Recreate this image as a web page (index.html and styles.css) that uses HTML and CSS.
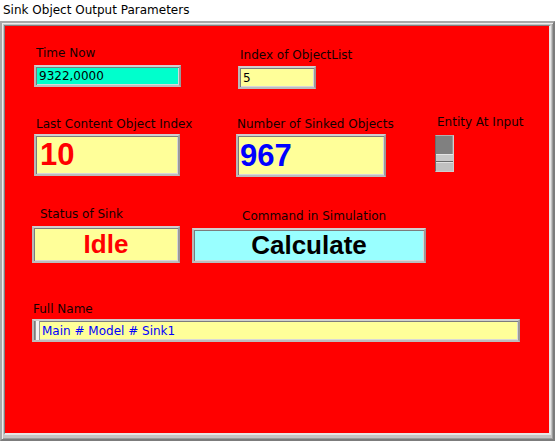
FILE: index.html
```html
<!DOCTYPE html>
<html>
<head>
<meta charset="utf-8">
<link rel="stylesheet" href="styles.css">
</head>
<body>
<div class="title">Sink Object Output Parameters</div>
<div class="frame">
  <div class="panel">
    <div class="row row1">
      <div class="item i-time">
        <div class="label">Time Now</div>
        <div class="field small cyan f-time">9322,0000</div>
      </div>
      <div class="item i-index">
        <div class="label">Index of ObjectList</div>
        <div class="field small yellow f-index">5</div>
      </div>
    </div>
    <div class="row row2">
      <div class="item i-last">
        <div class="label">Last Content Object Index</div>
        <div class="field big yellow red-text f-last">10</div>
      </div>
      <div class="item i-num">
        <div class="label">Number of Sinked Objects</div>
        <div class="field big yellow blue-text f-num">967</div>
      </div>
      <div class="item i-entity">
        <div class="label">Entity At Input</div>
        <div class="led">
          <div class="led-top"></div>
          <div class="led-mid"></div>
          <div class="led-bot"></div>
        </div>
      </div>
    </div>
    <div class="row row3">
      <div class="item i-status">
        <div class="label">Status of Sink</div>
        <div class="field mid yellow red-text f-status">Idle</div>
      </div>
      <div class="item i-cmd">
        <div class="label">Command in Simulation</div>
        <div class="field mid lightcyan f-cmd">Calculate</div>
      </div>
    </div>
    <div class="row row4">
      <div class="item i-name">
        <div class="label">Full Name</div>
        <div class="field small yellow blue-text f-name"><span class="caret"></span><span>Main # Model # Sink1</span></div>
      </div>
    </div>
  </div>
</div>
</body>
</html>
```
FILE: styles.css
```css
html, body {
  margin: 0;
  padding: 0;
  background: #ffffff;
}
body {
  width: 555px;
  height: 441px;
  overflow: hidden;
  font-family: "DejaVu Sans", sans-serif;
  font-size: 12px;
  color: #000;
}
.title {
  height: 21px;
  line-height: 21px;
  padding-left: 3px;
  white-space: nowrap;
}
.frame {
  width: 547px;
  height: 410px;
  border: 2px solid;
  border-color: #a8a8a8 #7c7c7c #7c7c7c #a8a8a8;
  padding: 2px 2px 4px 2px;
  background: #c4c4c4;
  box-shadow: inset 1px 1px 0 #ececec, inset -1px -1px 0 #9c9c9c;
}
.panel {
  width: 544px;
  height: 407px;
  background: #ff0000;
  border-style: solid;
  border-width: 1px 2px 2px 1px;
  border-color: #808080 #e6e6e6 #e6e6e6 #808080;
  display: flex;
  flex-direction: column;
}
.row {
  display: flex;
  align-items: flex-start;
}
.item {
  display: flex;
  flex-direction: column;
  flex: none;
}
.label {
  line-height: 14px;
  height: 14px;
  white-space: nowrap;
  color: #140000;
}
.field {
  box-sizing: border-box;
  border: 2px solid;
  border-color: #cfcfcf #9a9a9a #bdbdbd #b8b8b8;
  box-shadow: inset 1px 1px 0 #7c7c7c, inset -1px -1px 0 #d8d8d8;
  display: flex;
  align-items: center;
  white-space: nowrap;
  overflow: hidden;
}
.small { font-size: 12px; padding-left: 3px; }
.big { font-family: "Liberation Sans", sans-serif; font-weight: bold; font-size: 31px; }
.mid { font-family: "Liberation Sans", sans-serif; font-weight: bold; font-size: 26px; justify-content: center; }
.cyan { background: #00ffcc; }
.yellow { background: #ffff99; }
.lightcyan { background: #99ffff; }
.red-text { color: #ff0000; }
.blue-text { color: #0000ff; }

/* row 1 */
.row1 { margin-top: 20px; }
.i-time { margin-left: 29px; width: 147px; }
.i-time .label { padding-left: 2px; }
.f-time { margin-top: 5px; height: 22px; }
.i-index { margin-left: 57px; margin-top: 2px; width: 78px; }
.i-index .label { padding-left: 2px; }
.f-index { margin-top: 4px; height: 23px; }

/* row 2 */
.row2 { margin-top: 26px; }
.i-last { margin-left: 29px; margin-top: 2px; width: 146px; }
.i-last .label { padding-left: 2px; }
.f-last { margin-top: 3px; height: 42px; padding-left: 4px; }
.i-num { margin-left: 56px; margin-top: 2px; width: 150px; }
.i-num .label { padding-left: 1px; }
.f-num { margin-top: 3px; height: 43px; padding-left: 2px; }
.i-entity { margin-left: 49px; width: 19px; }
.i-entity .label { padding-left: 2px; }
.led {
  margin-top: 6px;
  width: 19px;
  height: 37px;
  box-sizing: border-box;
  border: 1px solid #cfcfcf;
  border-left-color: #6c6c6c;
  border-top-color: #b0b0b0;
  display: flex;
  flex-direction: column;
  background: #c0c0c0;
}
.led-top { height: 18px; background: #808080; border-right: 1px solid #9a9a9a; }
.led-mid { height: 6px; background: #c8c8c8; border-top: 1px solid #e4e4e4; border-bottom: 1px solid #6a6a6a; }
.led-bot { flex: 1; background: #c0c0c0; border-top: 1px solid #e0e0e0; }

/* row 3 */
.row3 { margin-top: 30px; }
.i-status { margin-left: 27px; width: 148px; }
.i-status .label { padding-left: 8px; }
.f-status { margin-top: 5px; height: 37px; }
.i-cmd { margin-left: 12px; margin-top: 2px; width: 234px; }
.i-cmd .label { padding-left: 50px; }
.f-cmd { margin-top: 5px; height: 35px; color: #000; }

/* row 4 */
.row4 { margin-top: 39px; }
.i-name { margin-left: 27px; width: 488px; }
.i-name .label { padding-left: 1px; }
.f-name { margin-top: 3px; height: 23px; padding-left: 1px; align-items: stretch; }
.f-name span:last-child { align-self: center; margin-left: 2px; }
.caret {
  width: 3px;
  background: #f4f4f4;
  border-left: 1px solid #9a9a9a;
  border-right: 1px solid #9a9a9a;
}
```
